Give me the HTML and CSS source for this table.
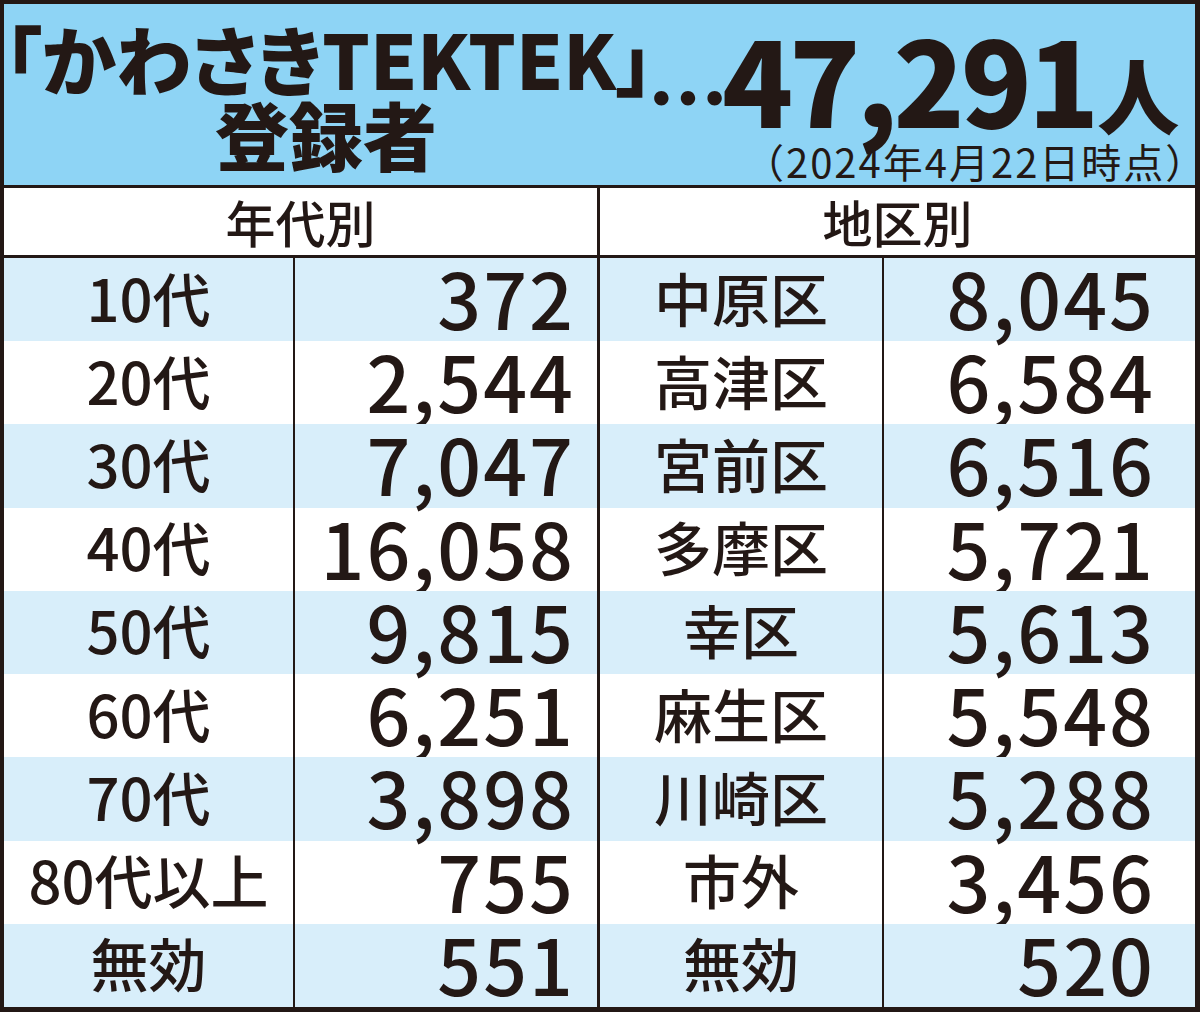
FILE: index.html
```html
<!DOCTYPE html>
<html lang="ja">
<head>
    <meta charset="UTF-8">
    <meta name="viewport" content="width=device-width, initial-scale=1.0">
    <title>かわさきTEKTEK 登録者</title>
    <link rel="stylesheet" href="styles.css">
</head>
<body>

    <div class="board">
        <div class="headline">
            <div class="headline-title">
                <div class="title-line">「かわさきTEKTEK」</div>
                <div class="title-line">登録者</div>
            </div>
            <div class="headline-total">
                <div class="total-line"><span class="dots">…</span>47,291<span class="unit">人</span></div>
                <div class="total-date">（2024年4月22日時点）</div>
            </div>
        </div>

        <div class="tables">
            <div class="table">
                <div class="table-head">年代別</div>
                <div class="row"><div class="label">10代</div><div class="value">372</div></div>
                <div class="row"><div class="label">20代</div><div class="value">2,544</div></div>
                <div class="row"><div class="label">30代</div><div class="value">7,047</div></div>
                <div class="row"><div class="label">40代</div><div class="value">16,058</div></div>
                <div class="row"><div class="label">50代</div><div class="value">9,815</div></div>
                <div class="row"><div class="label">60代</div><div class="value">6,251</div></div>
                <div class="row"><div class="label">70代</div><div class="value">3,898</div></div>
                <div class="row"><div class="label">80代以上</div><div class="value">755</div></div>
                <div class="row"><div class="label">無効</div><div class="value">551</div></div>
            </div>

            <div class="table table-area">
                <div class="table-head">地区別</div>
                <div class="row"><div class="label">中原区</div><div class="value">8,045</div></div>
                <div class="row"><div class="label">高津区</div><div class="value">6,584</div></div>
                <div class="row"><div class="label">宮前区</div><div class="value">6,516</div></div>
                <div class="row"><div class="label">多摩区</div><div class="value">5,721</div></div>
                <div class="row"><div class="label">幸区</div><div class="value">5,613</div></div>
                <div class="row"><div class="label">麻生区</div><div class="value">5,548</div></div>
                <div class="row"><div class="label">川崎区</div><div class="value">5,288</div></div>
                <div class="row"><div class="label">市外</div><div class="value">3,456</div></div>
                <div class="row"><div class="label">無効</div><div class="value">520</div></div>
            </div>
        </div>
    </div>

</body>
</html>
```

FILE: styles.css
```css
/* Global Styles */
* {
    box-sizing: border-box;
}

body {
    margin: 0;
    padding: 0;
    font-family: "Noto Sans CJK JP", "Noto Sans", sans-serif;
    color: #231815;
    background: white;
}

.board {
    width: 1200px;
    height: 1012px;
    border: 4px solid #231815;
    border-right-width: 5px;
    border-bottom-width: 5px;
    display: flex;
    flex-direction: column;
    overflow: hidden;
}

/* Headline */
.headline {
    height: 184px;
    flex-shrink: 0;
    background-color: #8ed4f5;
    border-bottom: 3px solid #231815;
    display: flex;
}

.headline-title {
    width: 644px;
    padding-top: 16px;
    text-align: center;
    font-weight: 900;
    line-height: 75px;
}

.title-line {
    font-size: 75px;
    font-feature-settings: "palt";
    white-space: nowrap;
}

.title-line + .title-line {
    font-size: 74px;
}

.headline-total {
    flex: 1;
    display: flex;
    flex-direction: column;
    align-items: flex-end;
    padding-top: 13px;
    padding-right: 4px;
}

.total-line {
    height: 122px;
    margin-right: 24px;
    font-size: 117px;
    font-weight: 900;
    line-height: 120px;
    white-space: nowrap;
    letter-spacing: -4px;
}

.dots {
    font-size: 80px;
    letter-spacing: -6px;
}

.unit {
    font-size: 82px;
    letter-spacing: 0;
    margin-left: 2px;
}

.total-date {
    font-size: 40px;
    line-height: 44px;
    letter-spacing: 2px;
    margin-right: -4px;
    white-space: nowrap;
}

/* Tables */
.tables {
    flex: 1;
    min-height: 0;
    display: grid;
    grid-template-columns: 593px 595px;
    column-gap: 3px;
    background-color: #231815;
}

.table {
    display: grid;
    grid-template-rows: 70px repeat(9, minmax(0, 1fr));
    background-color: white;
    min-height: 0;
}

.table-head {
    border-bottom: 3px solid #231815;
    display: flex;
    align-items: center;
    justify-content: center;
    font-size: 50px;
    font-weight: 500;
    line-height: 1;
    padding-bottom: 2px;
}

.row {
    display: grid;
    grid-template-columns: 291px 1fr;
    min-height: 0;
}

.row:nth-child(even) {
    background-color: #d8eefa;
}

.label {
    border-right: 2px solid #231815;
    display: flex;
    align-items: center;
    justify-content: center;
    padding-bottom: 8px;
    font-size: 58px;
    font-weight: 500;
    line-height: 1;
    white-space: nowrap;
}

.value {
    display: flex;
    align-items: center;
    justify-content: flex-end;
    padding-right: 22px;
    padding-bottom: 8px;
    font-size: 77px;
    font-weight: 500;
    line-height: 1;
    letter-spacing: 2px;
}

.table-area .row {
    grid-template-columns: 284px 1fr;
}

.table-area .value {
    padding-right: 40px;
}
```
